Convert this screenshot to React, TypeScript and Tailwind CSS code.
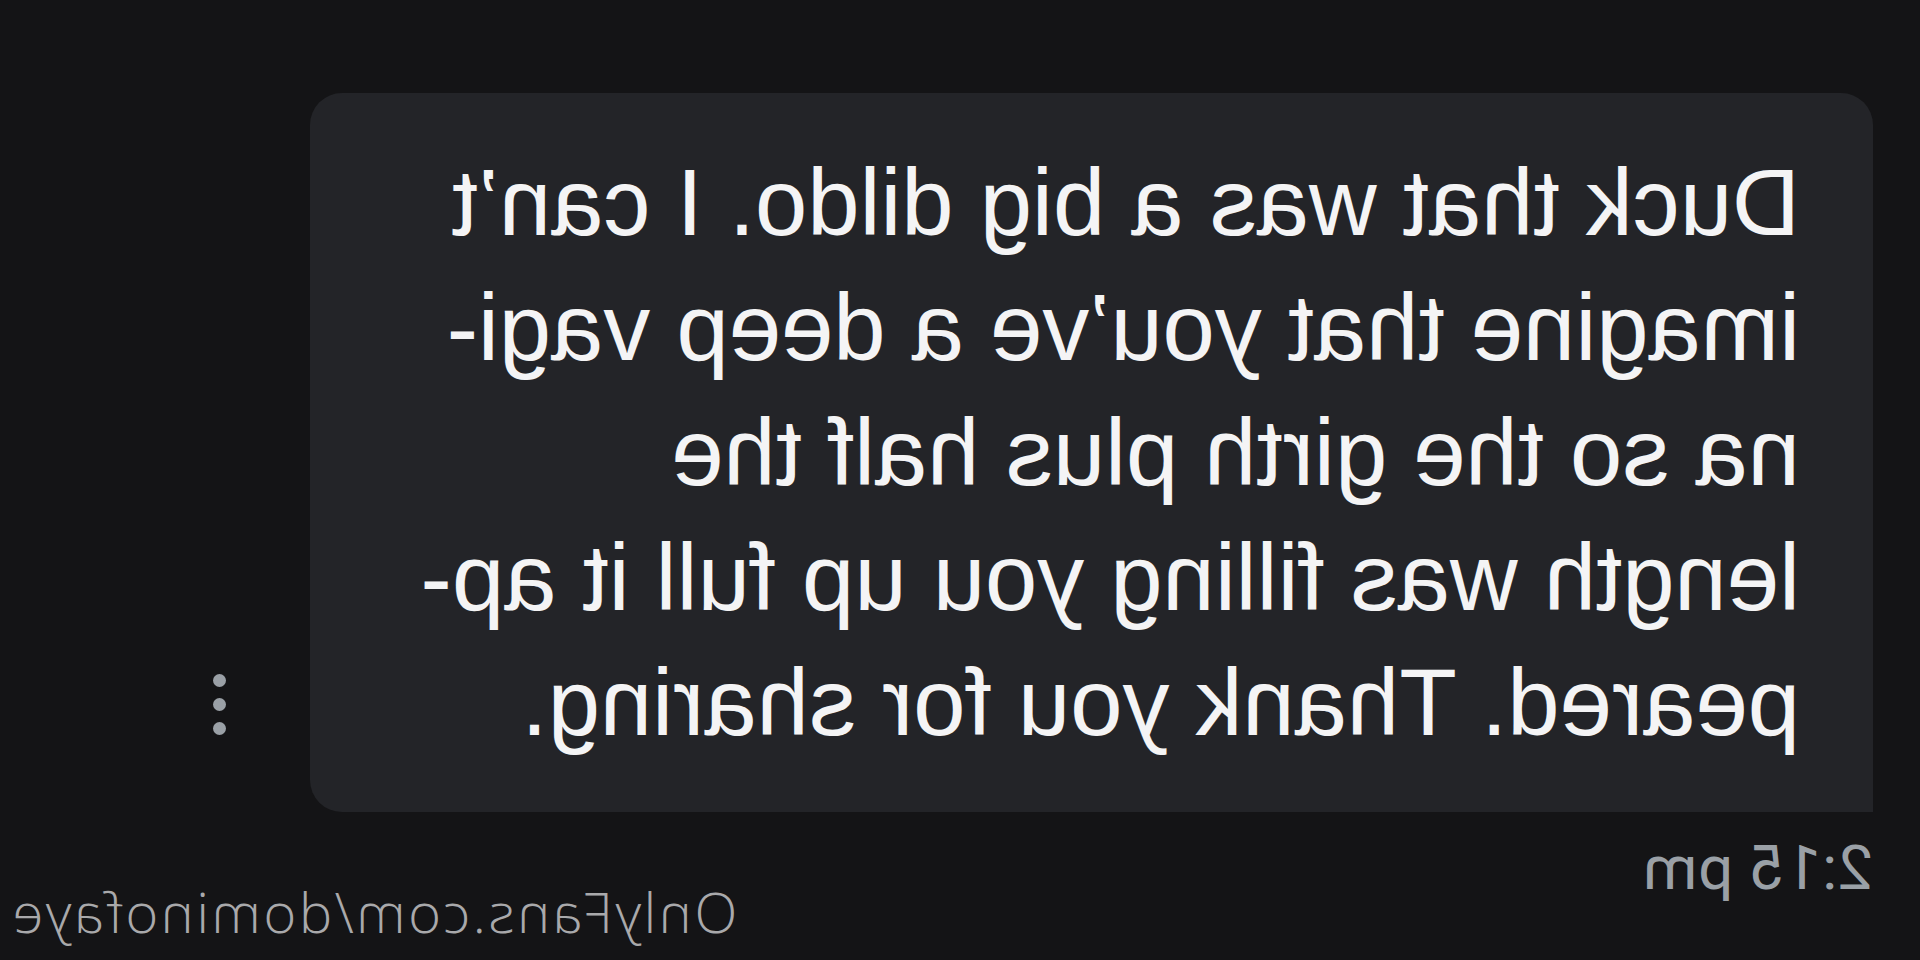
const lines = [
  'Duck that was a big dildo. I can’t',
  'imagine that you’ve a deep vagi-',
  'na so the girth plus half the',
  'length was filling you up full it ap-',
  'peared. Thank you for sharing.',
]

function MoreDots() {
  return (
    <div className="mb-[77px] ml-[84px] flex flex-col gap-[11px]">
      <span className="block size-[13px] rounded-full bg-[#9aa0a6]" />
      <span className="block size-[13px] rounded-full bg-[#9aa0a6]" />
      <span className="block size-[13px] rounded-full bg-[#9aa0a6]" />
    </div>
  )
}

function MessageBubble() {
  return (
    <div className="h-[719px] w-[1563px] shrink-0 rounded-[32px] rounded-bl-none bg-[#232428] pl-[73px] pt-[47px] font-['Liberation_Sans',Arial,sans-serif] text-[94px] leading-[125px] text-[#f4f4f5]">
      {lines.map((line) => (
        <div key={line} className="whitespace-nowrap">
          {line}
        </div>
      ))}
    </div>
  )
}

export default function App() {
  // the whole capture is shown flipped left to right
  return (
    <div className="h-[960px] w-[1920px] -scale-x-100 overflow-hidden bg-[#141416]">
      <div className="flex flex-col pl-[47px] pt-[93px]">
        <div className="flex items-end">
          <MessageBubble />
          <MoreDots />
        </div>
        <div className="mt-[25px] flex items-start justify-between pr-[10px]">
          <span className="font-['Roboto',sans-serif] text-[62px] leading-[62px] tracking-[1px] text-[#9aa0a6]">
            2:15 pm
          </span>
          <span className="mt-[46px] font-['Open_Sans',sans-serif] text-[56px] font-light leading-[56px] tracking-[2.5px] text-[#a9a9ab]">
            OnlyFans.com/dominofaye
          </span>
        </div>
      </div>
    </div>
  )
}
